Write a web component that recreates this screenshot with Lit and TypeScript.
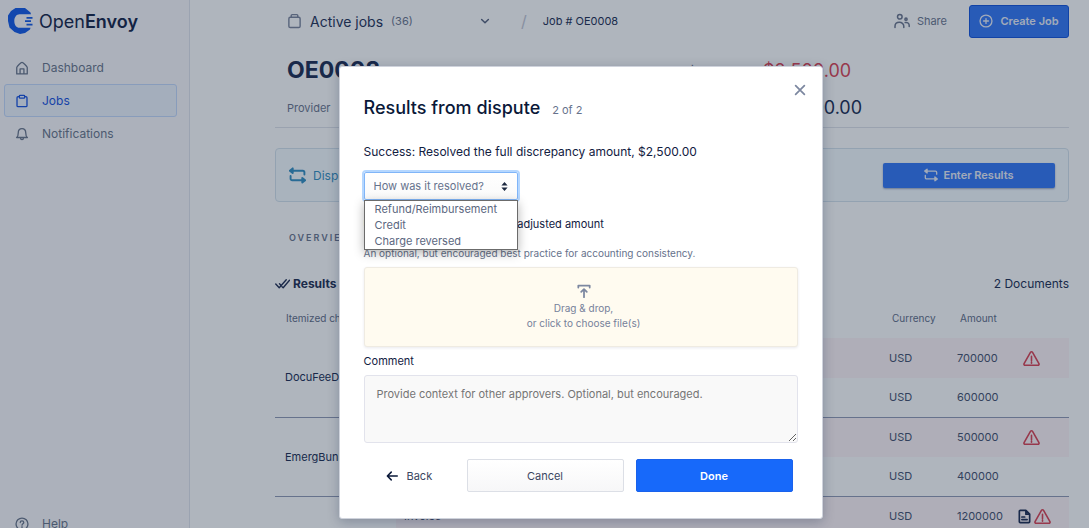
import { LitElement, html, css, svg, nothing } from "lit";
import { customElement, property } from "lit/decorators.js";
import { classMap } from "lit/directives/class-map.js";

const glyphs = {
  home: svg`<path d="M2 14.800V7.500C2 6 7 1.500 8 1.500S14 6 14 7.500v7.300zM5.800 14.500V9h4.400v5.500"/>`,
  clipboard: svg`<path d="M5 3H3.500A1.200 1.200 0 0 0 2.300 4.200v9.100a1.200 1.200 0 0 0 1.200 1.200h9a1.200 1.200 0 0 0 1.200-1.200V4.200A1.200 1.200 0 0 0 12.500 3H11"/><rect x="5" y="1.500" width="6" height="3.300" rx=".8"/>`,
  jar: svg`<rect x="2" y="4" width="12" height="11" rx="1.500"/><path d="M4.500 4V2.200A1 1 0 0 1 5.500 1.200h5a1 1 0 0 1 1 1V4"/>`,
  bell: svg`<path d="M1.800 12h12.400c-1.600-1-1.900-2.200-1.900-5.200C12.300 3.800 10.800 1.800 8 1.800S3.700 3.800 3.700 6.800c0 3-.3 4.200-1.900 5.200zM6.300 12.200c0 3 3.400 3 3.400 0"/>`,
  help: svg`<circle cx="8" cy="8" r="6.800"/><path d="M6 6.300c0-2.600 4-2.600 4 0C10 7.700 8 7.700 8 9.300M8 11v1.200"/>`,
  chevron: svg`<path d="M3.500 6 8 10.300 12.500 6"/>`,
  people: svg`<circle cx="5.800" cy="3.800" r="2.300"/><path d="M1 14.500v-1.200c0-5.300 8.800-5.300 8.800 0v1.200"/><circle cx="12" cy="6.200" r="1.100"/><path d="M11.200 9.500c2.200-.5 4 .8 4 3v1"/>`,
  plus: svg`<circle cx="8" cy="8" r="6.800"/><path d="M8 5.200v5.600M5.200 8h5.600"/>`,
  swap: svg`<path d="M2 3.500h11a1.500 1.500 0 0 1 1.500 1.500v2M14 12.500H3A1.500 1.500 0 0 1 1.500 11V8.500"/><path d="M3.500 1.300v4.400L.8 3.500zM12.500 10.300v4.400l2.700-2.200z" fill="currentColor"/>`,
  checks: svg`<path d="M.8 8.500 4.500 12.500 12 4M4.800 8.300l1 1M7.500 11.500l1.200 1L15.500 4.500"/>`,
  alert: svg`<path d="M7 2.200a1.200 1.200 0 0 1 2 0l6 10.600a1.100 1.100 0 0 1-1 1.600H2a1.100 1.100 0 0 1-1-1.600zM8 6v4M8 11.300v1.200"/>`,
  doc: svg`<path d="M9.500 1.500h-6a1 1 0 0 0-1 1v11a1 1 0 0 0 1 1h9a1 1 0 0 0 1-1v-8zM9.500 1.500v4h4M5.200 8.500h3M5.200 11.300h5.600"/>`,
  upload: svg`<path d="M1.500 4V1.800h13V4M8 15V6M4.800 9 8 5.800 11.200 9"/>`,
  close: svg`<path d="m3 3 10 10M13 3 3 13"/>`,
  back: svg`<path d="M15 8H2M7 2.800 1.800 8 7 13.200"/>`,
  sort: svg`<path d="M8 1.500 12.500 6.500h-9zM8 14.500 3.500 9.500h9z" fill="currentColor" stroke="none"/>`,
};
type Glyph = keyof typeof glyphs;

@customElement("ui-icon")
export class UiIcon extends LitElement {
  @property() name: Glyph = "home";
  static styles = css`
    :host { display: inline-flex; flex: none; width: 14px; height: 14px; }
    svg { width: 100%; height: 100%; fill: none; stroke: currentColor; stroke-width: var(--stroke, 1.5); stroke-linejoin: round; stroke-linecap: round; }
  `;
  render() {
    return html`<svg viewBox="0 0 16 16" aria-hidden="true">${glyphs[this.name]}</svg>`;
  }
}

@customElement("side-bar")
export class SideBar extends LitElement {
  static styles = css`
    :host { display: flex; flex-direction: column; box-sizing: border-box; width: 190px; flex: none; background: #f6f7fb; border-right: 1px solid #dfe2ec; padding: 0 12px 0 4px; }
    .brand { display: flex; align-items: center; gap: 6px; height: 42px; padding-left: 4px; font-size: 18px; color: #1c2c50; text-decoration: none; }
    .brand svg { width: 25px; height: 26px; }
    .brand b { font-weight: 600; }
    nav { display: flex; flex-direction: column; flex: 1; padding-top: 9px; }
    .item { display: flex; align-items: center; gap: 13px; box-sizing: border-box; height: 33px; padding-left: 10px; border: 1px solid transparent; border-radius: 3px; color: #6e7a90; font-size: 12px; line-height: 16px; text-decoration: none; }
    .active { color: #1f58e0; background: #ebf2fd; border-color: #c3d9fb; }
    .last { margin-top: auto; margin-bottom: -12px; }
  `;
  render() {
    const item = (icon: Glyph, label: string, active = false, last = false) => html`
      <a href="#" class=${classMap({ item: true, active, last })}><ui-icon name=${icon}></ui-icon>${label}</a>`;
    return html`
      <a class="brand" href="#">
        <svg viewBox="0 0 25 26" aria-hidden="true">
          <path fill="#1a5fe8" d="M7.500 0H17l5.500 4.500.5 1.700H11.500C8.500 6.200 6.300 9 6.300 13s2.200 6.800 5.200 6.800h11L22 21.500 17 25l-5 1-5.500-2L1.500 19.500 0 13V7.500L3 3z"/>
          <path stroke="#1a5fe8" stroke-width="1.700" d="M18.500 9.800h6M17 13.200h6M18.500 16.600h6"/>
        </svg>
        <span>Open<b>Envoy</b></span>
      </a>
      <nav>
        ${item("home", "Dashboard")}
        ${item("clipboard", "Jobs", true)}
        ${item("bell", "Notifications")}
        ${item("help", "Help", false, true)}
      </nav>`;
  }
}

interface Line { kind: string; amount: string; flagged: boolean; doc?: boolean }
const charges: { name: string; lines: Line[] }[] = [
  { name: "DocuFeeDelivery", lines: [{ kind: "Invoice", amount: "700000", flagged: true }, { kind: "Quote", amount: "600000", flagged: false }] },
  { name: "EmergBunkerFee", lines: [{ kind: "Invoice", amount: "500000", flagged: true }, { kind: "Quote", amount: "400000", flagged: false }] },
  { name: "Total", lines: [{ kind: "Invoice", amount: "1200000", flagged: true, doc: true }, { kind: "Quote", amount: "1000000", flagged: false }] },
];

@customElement("job-page")
export class JobPage extends LitElement {
  static styles = css`
    :host { display: block; flex: 1; min-width: 0; padding: 0 20px 0 85px; color: #28365a; font-size: 11px; }
    button { font: inherit; cursor: pointer; }
    .top { display: flex; align-items: center; height: 42px; padding-left: 12px; }
    .top .jobs { display: flex; align-items: center; gap: 8px; width: 204px; padding: 0; border: 0; background: none; color: #2b3a5e; font-size: 14px; }
    .jobs ui-icon { width: 15px; height: 16px; color: #7e88a0; }
    .jobs small { font-size: 11px; color: #6f7a92; }
    .jobs .down { width: 12px; height: 12px; margin-left: auto; color: #5c6884; --stroke: 2; }
    .slash { margin: 0 16px 0 30px; font-size: 16px; color: #c2c7d5; }
    .share { display: flex; align-items: center; gap: 7px; margin-left: auto; padding: 0; border: 0; background: none; color: #6f7a92; }
    .share ui-icon { width: 16px; height: 16px; }
    .create { display: flex; align-items: center; justify-content: center; gap: 7px; box-sizing: border-box; width: 100px; height: 33px; margin-left: 22px; padding: 0; border: 1px solid #1a59dd; border-radius: 3px; background: #3a7cf5; color: #e8edf8; font-weight: 600; }
    .summary { display: grid; grid-template-columns: 396px 80px 1fr; align-items: center; box-sizing: border-box; height: 86px; padding: 5px 0 5px 12px; border-bottom: 1px solid #dde1ea; color: #6f7a92; }
    h1 { margin: 0; font-size: 23px; line-height: 38px; font-weight: 700; color: #24345a; }
    .money { font-size: 18px; color: #24345a; }
    .money.bad { color: #d94a5c; }
    .banner { display: flex; align-items: center; gap: 7px; box-sizing: border-box; height: 54px; margin-top: 20px; padding: 0 13px; border: 1px solid #d3e1ec; border-radius: 4px; background: #f3f9fe; color: #3a93c4; font-size: 12px; }
    .banner > ui-icon { width: 17px; height: 17px; --stroke: 1.8; }
    .enter { display: flex; align-items: center; justify-content: center; gap: 5px; width: 172px; height: 25px; margin-left: auto; padding: 0; border: 0; border-radius: 2px; background: #3a7cf5; color: #e8edf8; font-size: 11px; font-weight: 600; box-shadow: 0 1px 2px #9aa7c4; }
    h2 { margin: 29px 0 0 14px; font-size: 9px; line-height: 14px; font-weight: 600; letter-spacing: 2px; color: #6f7a92; }
    .results { display: flex; align-items: center; gap: 3px; height: 20px; margin-top: 28px; font-size: 12px; }
    .results ui-icon { width: 15px; height: 15px; }
    .results span { margin-left: auto; }
    table { width: 100%; margin-top: 4px; border-collapse: collapse; table-layout: fixed; color: #4a5775; }
    .c-name { width: 121px; } .c-cur { width: 68px; } .c-amt { width: 66px; } .c-flag { width: 54px; }
    th { height: 41px; padding: 0 0 0 11px; text-align: left; font-size: 10px; font-weight: 400; color: #66728c; }
    td { box-sizing: border-box; height: 39px; padding: 0 8px; }
    tr:first-child td { height: 40px; }
    tbody { border-bottom: 1px solid #929db8; }
    .name { padding-left: 10px; color: #24345a; white-space: nowrap; }
    .flagged { background: #fbf3f6; }
    td.flags { padding: 0; white-space: nowrap; }
    .flags div { display: flex; gap: 2px; padding-left: 2px; align-items: center; }
    .flags .sole { padding-left: 8px; }
    .flags ui-icon { width: 17px; height: 17px; color: #d94a5c; }
    .flags .doc { width: 15px; color: #24345a; --stroke: 1.8; }
  `;
  render() {
    return html`
      <header class="top">
        <button class="jobs"><ui-icon name="jar"></ui-icon>Active jobs <small>(36)</small><ui-icon class="down" name="chevron"></ui-icon></button>
        <span class="slash">/</span><span>Job # OE0008</span>
        <button class="share"><ui-icon name="people"></ui-icon>Share</button>
        <button class="create"><ui-icon name="plus"></ui-icon>Create Job</button>
      </header>
      <section class="summary">
        <h1>OE0008</h1><span>Discrepancy</span><span class="money bad">$2,500.00</span>
        <span>Provider</span><span>Total</span><span class="money">$22,500.00</span>
      </section>
      <section class="banner">
        <ui-icon name="swap"></ui-icon>Dispute in progress
        <button class="enter"><ui-icon name="swap"></ui-icon>Enter Results</button>
      </section>
      <h2>OVERVIEW</h2>
      <div class="results"><ui-icon name="checks"></ui-icon><b>Results</b><span>2 Documents</span></div>
      <table>
        <colgroup><col class="c-name" /><col /><col class="c-cur" /><col class="c-amt" /><col class="c-flag" /></colgroup>
        <thead><tr><th>Itemized charges</th><th>Document</th><th>Currency</th><th>Amount</th><th></th></tr></thead>
        ${charges.map((c) => html`<tbody>${c.lines.map((l, i) => html`
          <tr>
            ${i === 0 ? html`<td class="name" rowspan=${c.lines.length}>${c.name}</td>` : nothing}
            ${[l.kind, "USD", l.amount].map((t) => html`<td class=${classMap({ flagged: l.flagged })}>${t}</td>`)}
            <td class=${classMap({ flags: true, flagged: l.flagged })}>
              <div class=${classMap({ sole: !l.doc })}>
                ${l.doc ? html`<ui-icon class="doc" name="doc"></ui-icon>` : nothing}
                ${l.flagged ? html`<ui-icon name="alert"></ui-icon>` : nothing}
              </div>
            </td>
          </tr>`)}</tbody>`)}
      </table>`;
  }
}

@customElement("dispute-dialog")
export class DisputeDialog extends LitElement {
  static styles = css`
    :host { display: block; position: relative; box-sizing: border-box; width: 484px; padding: 29px 24px 26px; border: 1px solid #cfd3dc; border-radius: 3px; background: #fff; box-shadow: 0 3px 12px rgba(9, 24, 60, 0.25); color: #12203f; font-size: 11px; line-height: 16px; }
    button { font: inherit; cursor: pointer; }
    .close { position: absolute; top: 16px; right: 15px; display: flex; padding: 0; border: 0; background: none; color: #7c87a0; --stroke: 2; }
    h2 { display: flex; align-items: baseline; gap: 12px; margin: 0; font-size: 18px; line-height: 24px; font-weight: 500; color: #0a1838; }
    h2 small { font-size: 11px; font-weight: 400; color: #66728c; }
    .outcome { margin: 20px 0 10px; font-size: 12px; line-height: 20px; }
    .picker { position: relative; width: 154px; }
    select { display: block; box-sizing: border-box; width: 100%; height: 28px; padding: 0 9px; appearance: none; border: 1px solid #80b5f8; border-radius: 2px; outline: 2px solid #b5d7ff; outline-offset: 0; background: linear-gradient(#fff, #fafafa); font: inherit; color: #66728c; }
    .picker ui-icon { position: absolute; top: 9px; right: 8px; width: 11px; height: 11px; color: #1d2940; pointer-events: none; }
    .menu { position: absolute; top: 28px; left: 0; right: 0; z-index: 1; margin: 0; padding: 0; list-style: none; border: 1px solid #6b6b6b; background: #fff; box-shadow: 0 3px 10px rgba(0, 0, 0, 0.3); color: #5b6780; }
    .menu li { padding: 0 10px; }
    .lead { display: block; margin-top: 16px; }
    .hint { margin: 14px 0 7px; font-size: 10px; line-height: 14px; color: #66728c; }
    .drop { display: flex; flex-direction: column; align-items: center; justify-content: center; box-sizing: border-box; width: 100%; height: 80px; padding: 0 0 0 6px; border: 1px solid #efebe2; border-radius: 3px; background: #fffbf0; box-shadow: 0 1px 3px #e9e9ee; font-size: 10px; line-height: 15px; color: #76819a; }
    .drop ui-icon { margin-bottom: 3px; color: #7c87a0; --stroke: 2; }
    label { display: block; }
    .drop + label { margin: 6px 0; }
    textarea { display: block; box-sizing: border-box; width: 100%; height: 68px; padding: 10px 12px; border: 1px solid #e2e3ec; border-radius: 3px; background: #f9f9f9; font: inherit; resize: vertical; }
    textarea::placeholder { color: #757575; }
    .actions { display: grid; grid-template-columns: 1fr 157px 157px; gap: 12px; margin-top: 16px; padding-right: 5px; }
    .actions button { height: 33px; padding: 0; border: 1px solid #dcdfe6; border-radius: 2px; background: linear-gradient(#fff, #f7f7f8); color: #3a4661; }
    .actions .back { display: flex; align-items: center; gap: 9px; justify-self: start; padding-left: 22px; border: 0; background: none; }
    .back ui-icon { width: 12px; height: 12px; color: #0a1838; --stroke: 2; }
    .actions .done { border-color: #1a62ec; background: #1769fa; color: #fff; font-weight: 600; }
  `;
  render() {
    const options = ["Refund/Reimbursement", "Credit", "Charge reversed"];
    return html`
      <button class="close" aria-label="Close"><ui-icon name="close"></ui-icon></button>
      <h2>Results from dispute <small>2 of 2</small></h2>
      <p class="outcome">Success: Resolved the full discrepancy amount, $2,500.00</p>
      <div class="picker">
        <select aria-label="How was it resolved?">
          <option selected>How was it resolved?</option>
          ${options.map((o) => html`<option>${o}</option>`)}
        </select>
        <ui-icon name="sort"></ui-icon>
        <ul class="menu" role="listbox" aria-label="Resolutions">${options.map((o) => html`<li role="option">${o}</li>`)}</ul>
      </div>
      <span class="lead">Upload documents reflecting adjusted amount</span>
      <p class="hint">An optional, but encouraged best practice for accounting consistency.</p>
      <button class="drop"><ui-icon name="upload"></ui-icon><span>Drag &amp; drop,</span><span>or click to choose file(s)</span></button>
      <label for="comment">Comment</label>
      <textarea id="comment" placeholder="Provide context for other approvers. Optional, but encouraged."></textarea>
      <div class="actions">
        <button class="back"><ui-icon name="back"></ui-icon>Back</button>
        <button>Cancel</button>
        <button class="done">Done</button>
      </div>`;
  }
}

@customElement("app-root")
export class AppRoot extends LitElement {
  static styles = css`
    :host { display: block; position: relative; height: 100vh; overflow: hidden; font-family: Inter, "Liberation Sans", sans-serif; }
    .shell { display: flex; height: 100%; background: #fbfcfe; }
    .veil { position: absolute; inset: 0; display: flex; justify-content: center; align-items: flex-start; box-sizing: border-box; padding: 66px 0 0 72px; background: rgba(0, 16, 40, 0.3); }
  `;
  render() {
    return html`
      <div class="shell"><side-bar></side-bar><job-page></job-page></div>
      <div class="veil"><dispute-dialog role="dialog" aria-modal="true" aria-label="Results from dispute"></dispute-dialog></div>`;
  }
}
